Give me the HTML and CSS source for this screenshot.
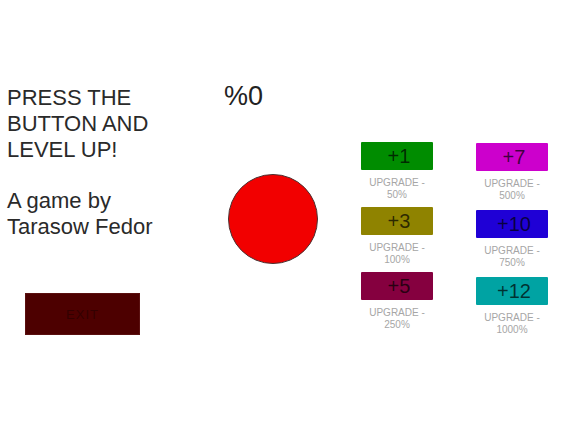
FILE: index.html
```html
<!DOCTYPE html>
<html lang="en">
<head>
    <meta charset="utf-8" />
    <title>Level Up</title>
    <link rel="stylesheet" href="styles.css">
</head>
<body>
    <main class="game">
        <section class="intro">
            <p class="title">PRESS THE<br />BUTTON AND<br />LEVEL UP!</p>
            <p class="credit">A game by<br />Tarasow Fedor</p>
            <button class="exitBtn">EXIT</button>
        </section>

        <section class="clicker">
            <div class="score">%0</div>
            <button class="tapBtn"></button>
        </section>

        <section class="upgrades">
            <div class="col">
                <div class="item">
                    <button class="buy green">+1</button>
                    <span class="cost">UPGRADE -<br />50%</span>
                </div>
                <div class="item">
                    <button class="buy olive">+3</button>
                    <span class="cost">UPGRADE -<br />100%</span>
                </div>
                <div class="item">
                    <button class="buy maroon">+5</button>
                    <span class="cost">UPGRADE -<br />250%</span>
                </div>
            </div>
            <div class="col colRight">
                <div class="item">
                    <button class="buy magenta">+7</button>
                    <span class="cost">UPGRADE -<br />500%</span>
                </div>
                <div class="item">
                    <button class="buy blue">+10</button>
                    <span class="cost">UPGRADE -<br />750%</span>
                </div>
                <div class="item">
                    <button class="buy teal">+12</button>
                    <span class="cost">UPGRADE -<br />1000%</span>
                </div>
            </div>
        </section>
    </main>
</body>
</html>
```

FILE: styles.css
```css
body,
p,
button {
    margin: 0;
    padding: 0
}

body {
    background: #fff;
    font-family: "Liberation Sans", Arial, sans-serif;
    color: #222
}

button {
    font-family: inherit;
    border: none;
    cursor: pointer
}

.game {
    display: flex;
    align-items: flex-start
}

/* left text column */
.intro {
    width: 224px;
    box-sizing: border-box;
    padding: 85px 0 0 7px;
    display: flex;
    flex-direction: column;
    align-items: flex-start
}

.title,
.credit {
    font-size: 22px;
    line-height: 26px;
    color: #2a2a2a
}

.credit {
    margin-top: 25px
}

.exitBtn {
    margin: 53px 0 0 18px;
    width: 115px;
    height: 42px;
    background: #4d0000;
    color: #330000;
    font-size: 13px;
    letter-spacing: 1px;
    border: 1px solid #5a1010
}

/* middle clicker */
.clicker {
    width: 137px;
    padding-top: 80px;
    display: flex;
    flex-direction: column;
    align-items: flex-start
}

.score {
    font-size: 27px;
    line-height: 32px;
    color: #222
}

.tapBtn {
    margin: 62px 0 0 4px;
    width: 90px;
    height: 90px;
    border-radius: 50%;
    background: #f20000;
    border: 1px solid #4a3030
}

/* upgrade grid */
.upgrades {
    display: flex;
    gap: 43px;
    padding-top: 142px
}

.col {
    display: flex;
    flex-direction: column;
    gap: 6px;
    width: 72px
}

.colRight {
    padding-top: 1px;
    gap: 8px
}

.item {
    display: flex;
    flex-direction: column;
    align-items: center
}

.buy {
    width: 72px;
    height: 28px;
    font-size: 20px;
    color: rgba(0, 0, 0, 0.7);
    padding-left: 4px;
    border-radius: 1px
}

.cost {
    margin-top: 7px;
    font-size: 10px;
    line-height: 12px;
    color: #a6a6a6;
    text-align: center
}

.green { background: #008c00 }
.olive { background: #8f8300 }
.maroon { background: #85003f }
.magenta { background: #cc00cc }
.blue { background: #1f00d6 }
.teal { background: #00a3a3 }
```
